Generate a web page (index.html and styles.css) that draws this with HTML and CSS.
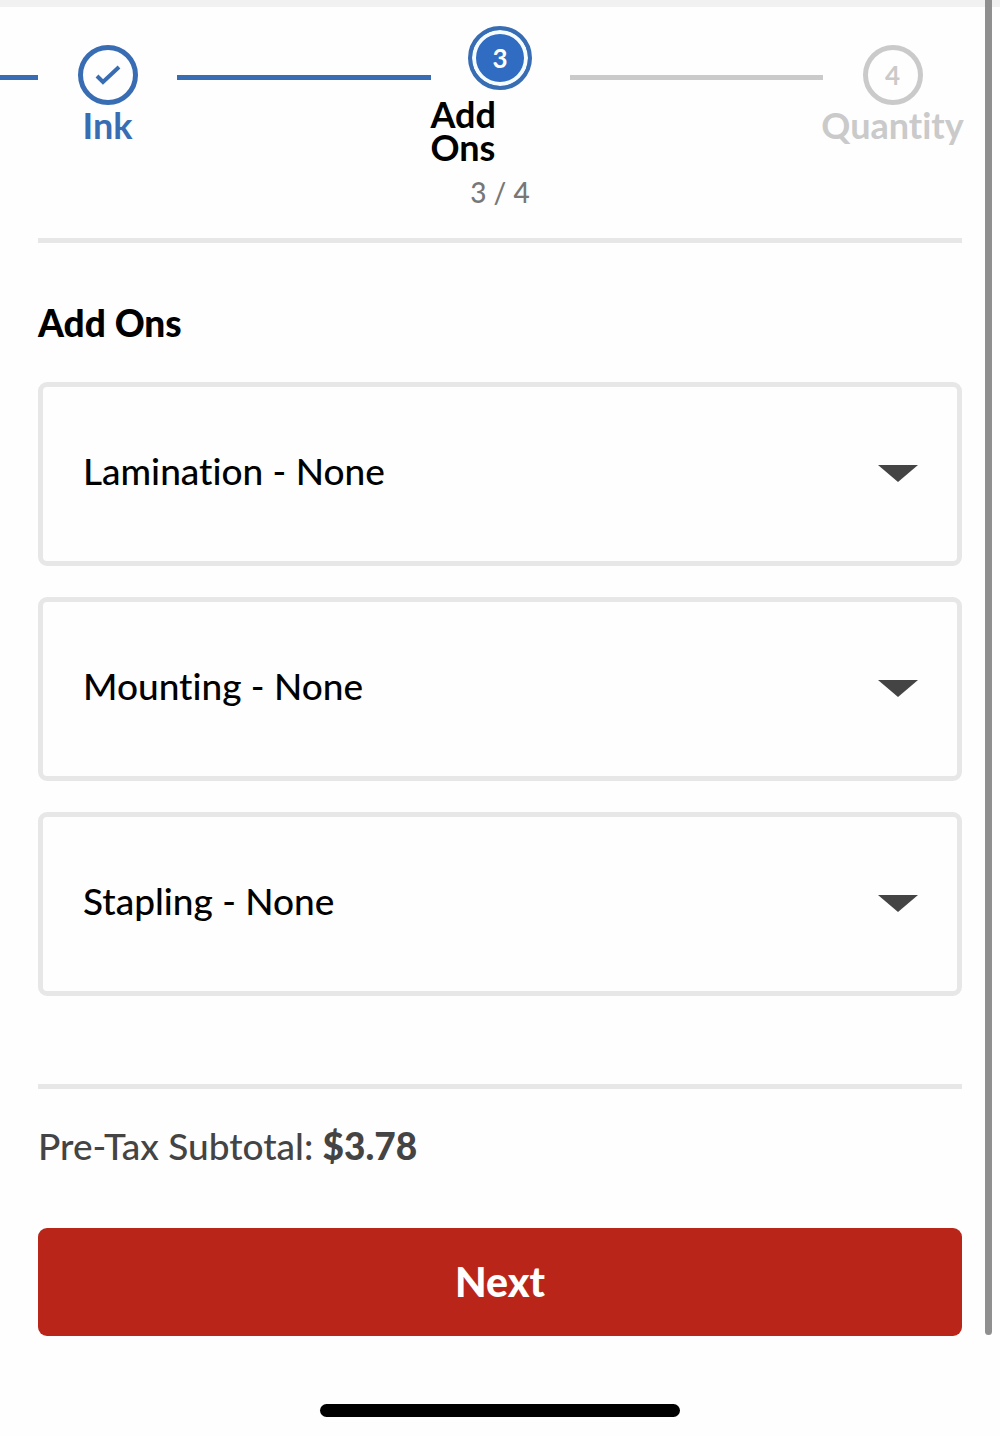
FILE: index.html
```html
<!DOCTYPE html>
<html lang="en">
<head>
  <meta charset="UTF-8">
  <meta name="viewport" content="width=device-width, initial-scale=1.0">
  <title>Add Ons</title>
  <link rel="stylesheet" href="styles.css">
</head>
<body>
  <div class="top-strip"></div>
  <div class="scrollbar"></div>

  <div class="stepper">
    <div class="line line-start done"></div>
    <div class="step done">
      <div class="circle">
        <svg width="26" height="22" viewBox="0 0 26 22" aria-hidden="true">
          <path d="M2 12l6 6L24 3" fill="none" stroke="currentColor" stroke-width="4"/>
        </svg>
      </div>
      <div class="label">Ink</div>
    </div>
    <div class="line done"></div>
    <div class="step active">
      <div class="circle">3</div>
      <div class="label">Add<br>Ons</div>
    </div>
    <div class="line"></div>
    <div class="step">
      <div class="circle">4</div>
      <div class="label">Quantity</div>
    </div>
  </div>
  <p class="step-count">3 / 4</p>

  <form class="container">
    <hr>
    <h1>Add Ons</h1>
    <div class="options">
      <div class="option">
        <select name="lamination" aria-label="Lamination">
          <option>Lamination - None</option>
        </select>
        <svg class="arrow" width="40" height="18" viewBox="0 0 40 18" aria-hidden="true"><path d="M0 0h40L20 17z"/></svg>
      </div>
      <div class="option">
        <select name="mounting" aria-label="Mounting">
          <option>Mounting - None</option>
        </select>
        <svg class="arrow" width="40" height="18" viewBox="0 0 40 18" aria-hidden="true"><path d="M0 0h40L20 17z"/></svg>
      </div>
      <div class="option">
        <select name="stapling" aria-label="Stapling">
          <option>Stapling - None</option>
        </select>
        <svg class="arrow" width="40" height="18" viewBox="0 0 40 18" aria-hidden="true"><path d="M0 0h40L20 17z"/></svg>
      </div>
    </div>
    <hr>
    <p class="subtotal">Pre-Tax Subtotal: <strong>$3.78</strong></p>
    <button class="next-button" type="button">Next</button>
  </form>

  <div class="home-bar"></div>
</body>
</html>
```
FILE: styles.css
```css
* {
  box-sizing: border-box;
}
body {
  margin: 0;
  font-family: Lato, "Liberation Sans", sans-serif;
  font-size: 37px;
  line-height: 44px;
  font-variant-ligatures: none;
  color: #000;
  background-color: #fefefe;
}
.top-strip {
  height: 7px;
  background-color: #f1f1f1;
}
.scrollbar {
  position: absolute;
  top: 0;
  right: 8px;
  width: 7px;
  height: 1335px;
  background-color: #8f8f8f;
  border-radius: 0 0 4px 4px;
}

/* Stepper */
.stepper {
  display: flex;
  align-items: flex-start;
  height: 163px;
  padding-right: 38px;
}
.line {
  flex: 1;
  height: 5px;
  margin-top: 68px;
  background-color: #cacaca;
}
.line-start {
  flex: none;
  width: 38px;
}
.line.done {
  background-color: #386db3;
}
.step {
  display: flex;
  flex-direction: column;
  align-items: center;
  flex: none;
  width: 139px;
  padding-top: 38px;
  color: #cacaca;
}
.circle {
  display: flex;
  justify-content: center;
  align-items: center;
  width: 60px;
  height: 60px;
  border: 5px solid currentColor;
  border-radius: 50%;
  font-size: 26px;
  font-weight: 700;
}
.label {
  margin-top: 4px;
  font-size: 36px;
  font-weight: 700;
  line-height: 33px;
}
.step.done {
  color: #386db3;
}
.step.active {
  padding-top: 19px;
  color: #000;
}
.active .circle {
  width: 64px;
  height: 64px;
  border: 4px solid #386db3;
  box-shadow: inset 0 0 0 4px #f4fcff;
  background-color: #306cc2;
  color: #fff;
}
.active .label {
  align-self: flex-start;
  margin-top: 8px;
}
.step-count {
  margin: 0 0 24px;
  font-size: 28px;
  font-weight: 500;
  text-align: center;
  color: #777;
}

/* Add on options */
.container {
  padding: 0 38px;
}
hr {
  height: 5px;
  margin: 0;
  border: none;
  background-color: #e7e7e7;
}
h1 {
  margin: 58px 0 37px;
  font-size: 37px;
  font-weight: 900;
  line-height: 44px;
}
.options {
  display: flex;
  flex-direction: column;
  gap: 31px;
  margin-bottom: 88px;
}
.option {
  display: grid;
  align-items: center;
}
.option select,
.arrow {
  grid-area: 1 / 1;
}
.option select {
  appearance: none;
  width: 100%;
  padding: 62px 90px 68px 40px;
  border: 5px solid #e7e7e7;
  border-radius: 9px;
  background-color: #fefefe;
  color: #000;
  font: inherit;
  font-weight: 500;
}
.arrow {
  justify-self: end;
  margin-right: 44px;
  fill: #444;
  pointer-events: none;
}

.subtotal {
  margin: 35px 0 60px;
  color: #444;
  font-weight: 500;
}
.subtotal strong {
  font-weight: 900;
}
.next-button {
  display: block;
  width: 100%;
  padding: 32px 31px;
  border: none;
  border-radius: 9px;
  background-color: #b92619;
  color: #fff;
  font: inherit;
  font-size: 41px;
  font-weight: 900;
  cursor: pointer;
}
.home-bar {
  width: 36%;
  height: 13px;
  margin: 68px auto 19px;
  border-radius: 7px;
  background-color: #000;
}
```
